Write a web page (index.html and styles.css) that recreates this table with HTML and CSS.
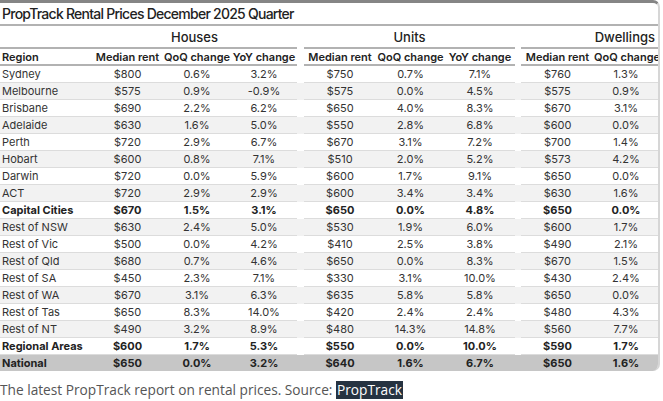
FILE: index.html
```html
<!DOCTYPE html>
<html>
<head>
<meta charset="utf-8">
<link rel="stylesheet" href="styles.css">
</head>
<body>
<div class="frame">
<table class="rent">
<colgroup>
<col class="c-region"><col class="c-hm"><col class="c-hq"><col class="c-hy"><col class="c-sp">
<col class="c-um"><col class="c-uq"><col class="c-uy"><col class="c-sp2">
<col class="c-dm"><col class="c-dq">
</colgroup>
<thead>
<tr class="title"><th colspan="11">PropTrack Rental Prices December 2025 Quarter</th></tr>
<tr class="groups"><th></th><th colspan="3">Houses</th><th class="sp"></th><th colspan="3">Units</th><th class="sp"></th><th colspan="2" class="dw">Dwellings</th></tr>
<tr class="cols"><th class="region">Region</th><th>Median rent</th><th>QoQ change</th><th>YoY change</th><th class="sp"></th><th>Median rent</th><th>QoQ change</th><th>YoY change</th><th class="sp"></th><th>Median rent</th><th>QoQ change</th></tr>
</thead>
<tbody>
<tr><td>Sydney</td><td>$800</td><td>0.6%</td><td>3.2%</td><td class="sp"></td><td>$750</td><td>0.7%</td><td>7.1%</td><td class="sp"></td><td>$760</td><td>1.3%</td></tr>
<tr><td>Melbourne</td><td>$575</td><td>0.9%</td><td>-0.9%</td><td class="sp"></td><td>$575</td><td>0.0%</td><td>4.5%</td><td class="sp"></td><td>$575</td><td>0.9%</td></tr>
<tr><td>Brisbane</td><td>$690</td><td>2.2%</td><td>6.2%</td><td class="sp"></td><td>$650</td><td>4.0%</td><td>8.3%</td><td class="sp"></td><td>$670</td><td>3.1%</td></tr>
<tr><td>Adelaide</td><td>$630</td><td>1.6%</td><td>5.0%</td><td class="sp"></td><td>$550</td><td>2.8%</td><td>6.8%</td><td class="sp"></td><td>$600</td><td>0.0%</td></tr>
<tr><td>Perth</td><td>$720</td><td>2.9%</td><td>6.7%</td><td class="sp"></td><td>$670</td><td>3.1%</td><td>7.2%</td><td class="sp"></td><td>$700</td><td>1.4%</td></tr>
<tr><td>Hobart</td><td>$600</td><td>0.8%</td><td>7.1%</td><td class="sp"></td><td>$510</td><td>2.0%</td><td>5.2%</td><td class="sp"></td><td>$573</td><td>4.2%</td></tr>
<tr><td>Darwin</td><td>$720</td><td>0.0%</td><td>5.9%</td><td class="sp"></td><td>$600</td><td>1.7%</td><td>9.1%</td><td class="sp"></td><td>$650</td><td>0.0%</td></tr>
<tr><td>ACT</td><td>$720</td><td>2.9%</td><td>2.9%</td><td class="sp"></td><td>$600</td><td>3.4%</td><td>3.4%</td><td class="sp"></td><td>$630</td><td>1.6%</td></tr>
<tr class="bold"><td>Capital Cities</td><td>$670</td><td>1.5%</td><td>3.1%</td><td class="sp"></td><td>$650</td><td>0.0%</td><td>4.8%</td><td class="sp"></td><td>$650</td><td>0.0%</td></tr>
<tr><td>Rest of NSW</td><td>$630</td><td>2.4%</td><td>5.0%</td><td class="sp"></td><td>$530</td><td>1.9%</td><td>6.0%</td><td class="sp"></td><td>$600</td><td>1.7%</td></tr>
<tr><td>Rest of Vic</td><td>$500</td><td>0.0%</td><td>4.2%</td><td class="sp"></td><td>$410</td><td>2.5%</td><td>3.8%</td><td class="sp"></td><td>$490</td><td>2.1%</td></tr>
<tr><td>Rest of Qld</td><td>$680</td><td>0.7%</td><td>4.6%</td><td class="sp"></td><td>$650</td><td>0.0%</td><td>8.3%</td><td class="sp"></td><td>$670</td><td>1.5%</td></tr>
<tr><td>Rest of SA</td><td>$450</td><td>2.3%</td><td>7.1%</td><td class="sp"></td><td>$330</td><td>3.1%</td><td>10.0%</td><td class="sp"></td><td>$430</td><td>2.4%</td></tr>
<tr><td>Rest of WA</td><td>$670</td><td>3.1%</td><td>6.3%</td><td class="sp"></td><td>$635</td><td>5.8%</td><td>5.8%</td><td class="sp"></td><td>$650</td><td>0.0%</td></tr>
<tr><td>Rest of Tas</td><td>$650</td><td>8.3%</td><td>14.0%</td><td class="sp"></td><td>$420</td><td>2.4%</td><td>2.4%</td><td class="sp"></td><td>$480</td><td>4.3%</td></tr>
<tr><td>Rest of NT</td><td>$490</td><td>3.2%</td><td>8.9%</td><td class="sp"></td><td>$480</td><td>14.3%</td><td>14.8%</td><td class="sp"></td><td>$560</td><td>7.7%</td></tr>
<tr class="bold"><td>Regional Areas</td><td>$600</td><td>1.7%</td><td>5.3%</td><td class="sp"></td><td>$550</td><td>0.0%</td><td>10.0%</td><td class="sp"></td><td>$590</td><td>1.7%</td></tr>
<tr class="bold national"><td>National</td><td>$650</td><td>0.0%</td><td>3.2%</td><td class="sp"></td><td>$640</td><td>1.6%</td><td>6.7%</td><td class="sp"></td><td>$650</td><td>1.6%</td></tr>
</tbody>
</table>
</div>
<p class="caption">The latest PropTrack report on rental prices. Source: <span class="src">PropTrack</span></p>
</body>
</html>
```

FILE: styles.css
```css
html, body {
  margin: 0;
  padding: 0;
  background: #fff;
}

.frame {
  width: 658px;
  border-top: 3px solid #858585;
  border-right: 2px solid #d6d6d6;
  border-top-right-radius: 7px;
  border-bottom-right-radius: 7px;
  overflow: hidden;
}

.rent {
  width: 658px;
  table-layout: fixed;
  border-collapse: collapse;
  font-family: Inter, "Liberation Sans", sans-serif;
  font-size: 11px;
  color: #333;
}

.c-region { width: 92px; }
.c-hm { width: 71px; }
.c-hq { width: 68px; }
.c-hy { width: 66px; }
.c-sp { width: 7px; }
.c-um { width: 72px; }
.c-uq { width: 69px; }
.c-uy { width: 70px; }
.c-sp2 { width: 6px; }
.c-dm { width: 73px; }
.c-dq { width: 64px; }

.rent th, .rent td {
  padding: 0;
  text-align: center;
  white-space: nowrap;
}

.title th {
  height: 21px;
  text-align: left;
  padding-left: 2px;
  font-size: 14px;
  font-weight: 500;
  color: #222;
  letter-spacing: -0.75px;
  border-bottom: 2px solid #b2b2b2;
  vertical-align: middle;
}

.groups th {
  height: 21px;
  font-size: 13px;
  font-weight: 500;
  color: #222;
  border-bottom: 2px solid #b2b2b2;
}

.groups th.dw {
  text-align: right;
  padding-right: 3px;
}

.cols th {
  height: 15px;
  font-weight: 600;
  color: #222;
  border-bottom: 2px solid #b2b2b2;
}

.cols th.region {
  text-align: left;
  padding-left: 2px;
}

.rent th.sp, .rent td.sp {
  border-bottom: none;
}

.rent tbody td {
  height: 16px;
  border-bottom: 1px solid #dcdcdc;
}

.rent tbody td:first-child {
  text-align: left;
  padding-left: 2px;
}

.rent tbody tr:nth-child(even) {
  background: #f2f2f2;
}

.rent tbody tr.bold td {
  font-weight: 700;
  color: #222;
}

.rent tbody tr.national {
  background: #c6c6c6;
}

.rent tbody tr.national td {
  border-bottom: none;
}

.caption {
  margin: 10px 0 0 0;
  font-family: "Open Sans", "Liberation Sans", sans-serif;
  font-size: 13.7px;
  line-height: 18px;
  color: #555;
}

.src {
  display: inline-block;
  background: #263341;
  color: #fff;
  padding: 0 1px;
}
```
